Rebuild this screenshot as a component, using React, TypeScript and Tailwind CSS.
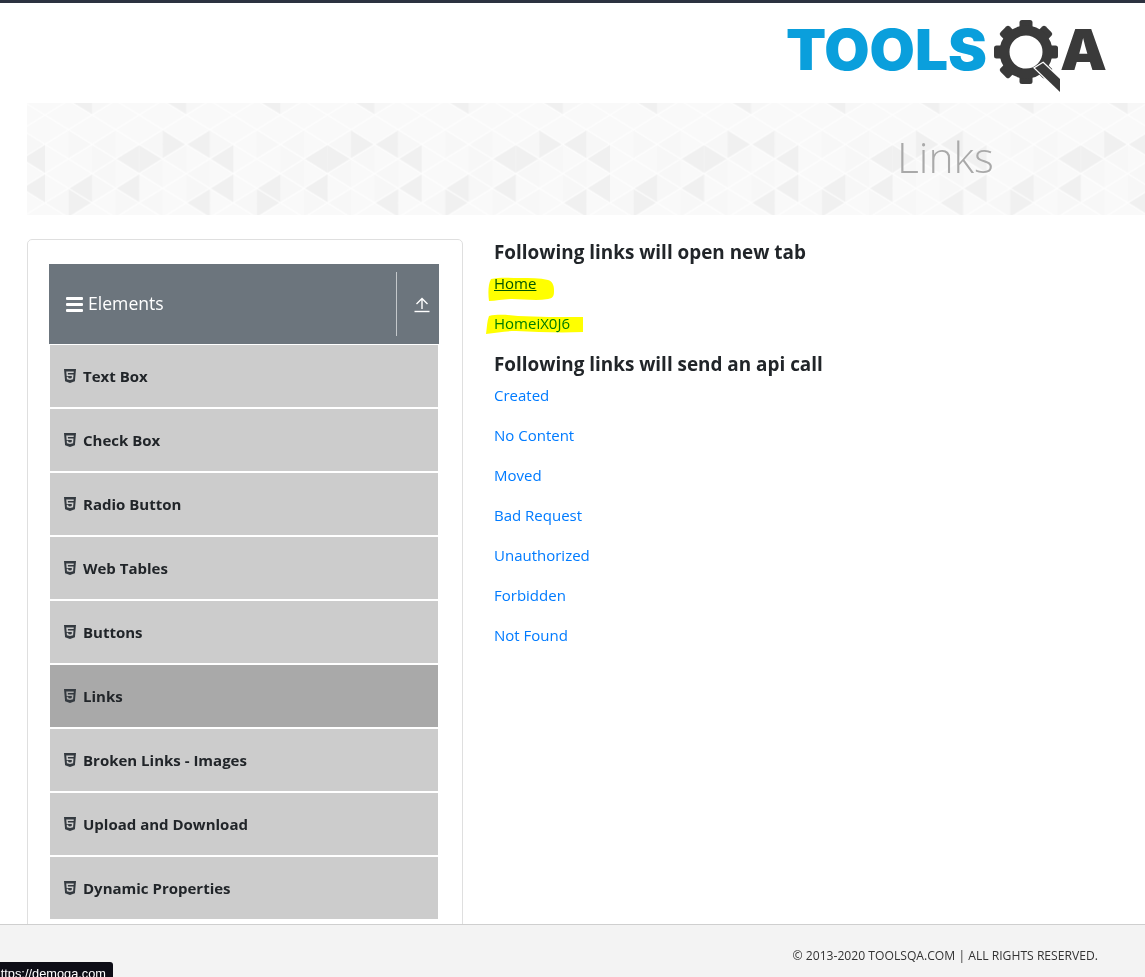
import { FaHtml5 } from "react-icons/fa";

const items = [
  "Text Box",
  "Check Box",
  "Radio Button",
  "Web Tables",
  "Buttons",
  "Links",
  "Broken Links - Images",
  "Upload and Download",
  "Dynamic Properties",
];

const apiLinks = ["Created", "No Content", "Moved", "Bad Request", "Unauthorized", "Forbidden", "Not Found"];

// banner lattice: one tile is 8 columns wide
const COL = 23.54;
const ROW = 14.65;
const px = (c: number) => c * COL;
const py = (r: number) => (r + 2) * ROW;

// [edge column, first row, apex column]
const darkTriangles = [
  [4, 2, 3],
  [4, 2, 5],
  [5, 1, 6],
  [7, 1, 6],
  [8, 2, 7],
  [8, 4, 7],
  [2, 4, 1],
  [4, 4, 3],
  [1, 5, 2],
  [7, 5, 6],
  [2, -2, 1],
  [6, -2, 5],
];

const softTriangles = [
  [2, -2, 3],
  [6, -2, 7],
  [1, 1, 2],
  [3, 1, 2],
  [7, 1, 8],
  [5, 1, 4],
  [2, 2, 3],
  [6, 2, 5],
  [6, 4, 7],
  [2, 4, 3],
  [5, 3, 4],
  [1, 5, 0],
  [3, 3, 2],
  [7, 3, 6],
  [5, 5, 4],
  [3, 5, 4],
];

function triangle([edge, row, apex]: number[]) {
  return `${px(edge)},${py(row)} ${px(edge)},${py(row + 2)} ${px(apex)},${py(row + 1)}`;
}

const diagonals: string[] = [];
for (let c = 0; c < 8; c++) {
  for (let r = -2; r < 8; r++) {
    if ((c + r) % 2 !== 0) continue;
    diagonals.push(`M${px(c)} ${py(r)}L${px(c + 1)} ${py(r + 1)}`);
    diagonals.push(`M${px(c)} ${py(r)}L${px(c + 1)} ${py(r - 1)}`);
  }
}

function BannerPattern() {
  return (
    <svg className="absolute inset-0 h-full w-full" aria-hidden="true">
      <defs>
        <pattern id="tri" x="18" y="-17.3" width={COL * 8} height={ROW * 12} patternUnits="userSpaceOnUse">
          {softTriangles.map((t, i) => (
            <polygon key={i} points={triangle(t)} fill="#f7f7f7" />
          ))}
          {darkTriangles.map((t, i) => (
            <polygon key={i} points={triangle(t)} fill="#f0f0f0" />
          ))}
          <path d={diagonals.join("")} stroke="#ffffff" strokeWidth="1.1" opacity="0.8" />
        </pattern>
      </defs>
      <rect width="100%" height="100%" fill="url(#tri)" />
    </svg>
  );
}

function Logo() {
  const teeth = [0, 45, 90, 135, 180, 225, 270, 315];
  return (
    <svg width="326" height="88" viewBox="785 8 326 88" role="img" aria-label="Tools QA">
      <text
        x="786"
        y="70"
        fontFamily="Inter, 'DejaVu Sans', sans-serif"
        fontWeight="900"
        fontSize="56"
        textLength="201"
        lengthAdjust="spacingAndGlyphs"
        fill="#0a9fdc"
      >
        TOOLS
      </text>
      <g fill="#3a3a3a">
        {teeth.map((a) => (
          <rect key={a} x="1019.5" y="20" width="13" height="12" rx="2.5" transform={`rotate(${a} 1026 52)`} />
        ))}
      </g>
      <circle cx="1026" cy="52" r="21.5" fill="none" stroke="#3a3a3a" strokeWidth="10" />
      <polygon points="1043,63 1060,79 1060,92 1035,68" fill="#3a3a3a" stroke="#ffffff" strokeWidth="2.5" paintOrder="stroke" />
      <text
        x="1060"
        y="70"
        fontFamily="Inter, 'DejaVu Sans', sans-serif"
        fontWeight="900"
        fontSize="56"
        textLength="47"
        lengthAdjust="spacingAndGlyphs"
        fill="#3a3a3a"
      >
        A
      </text>
    </svg>
  );
}

export default function App() {
  return (
    <div className="relative flex h-[977px] w-full flex-col overflow-hidden bg-white font-['Open_Sans',sans-serif] text-[#212529]">
      <div className="h-[3px] shrink-0 bg-[#2c3240]" />
      <header className="flex h-[100px] shrink-0 items-start justify-end pr-[34px] pt-[5px]">
        <Logo />
      </header>

      <div className="relative ml-[27px] flex h-[112px] shrink-0 items-center overflow-hidden bg-[#f9f9f9] pb-[3px] pl-[870px]">
        <BannerPattern />
        <h1 className="relative text-[42.5px] font-light leading-none text-[#a9a9a9]">Links</h1>
      </div>

      <main className="ml-[27px] mt-[24px] flex min-h-0 flex-1 overflow-hidden">
        <aside className="h-[800px] w-[436px] shrink-0 rounded-[5px] border border-[#dfdfdf] pl-[21px] pt-[24px]">
          <div className="flex h-[80px] w-[390px] items-center bg-[#6c757d] text-white">
            <svg width="17" height="15" viewBox="0 0 17 15" className="ml-[17px] mt-px" fill="#ffffff">
              <rect y="0" width="17" height="3" rx="1" />
              <rect y="6" width="17" height="3" rx="1" />
              <rect y="12" width="17" height="3" rx="1" />
            </svg>
            <span className="mb-px ml-[5px] text-[17.6px] leading-none">Elements</span>
            <div className="ml-auto flex h-[64px] w-[43px] items-center justify-center border-l border-[#c4c8cb] pl-[7px]">
              <svg width="16" height="16" viewBox="0 0 16 16" className="mt-[2px]" fill="none" stroke="#ffffff" strokeWidth="1.4">
                <path d="M0.5 14.5H15.5" />
                <path d="M8 12V1.5M2.5 7L8 1.5L13.5 7" />
              </svg>
            </div>
          </div>
          <ul className="w-[390px]">
            {items.map((item) => (
              <li
                key={item}
                className={`flex h-[64px] items-center border border-white pl-[12px] text-[15px] font-bold ${
                  item === "Links" ? "bg-[#a9a9a9]" : "bg-[#cccccc]"
                }`}
              >
                <FaHtml5 size={16} className="mr-[5px] shrink-0 text-[#343a40]" />
                <span>{item}</span>
              </li>
            ))}
          </ul>
        </aside>

        <section className="ml-[31px] pt-px text-[15px] leading-[22px]">
          <h5 className="mb-[8px] text-[18.9px] font-bold leading-[24px]">Following links will open new tab</h5>
          <p className="relative mb-[18px]">
            <a href="#home" className="text-[#0056b3] underline">
              Home
            </a>
            <svg className="absolute left-[-6px] top-[4px] mix-blend-multiply" width="68" height="26" viewBox="0 0 68 26" fill="#ffff00">
              <path d="M3 3C12 1 22 2 32 2C42 2 52 2 60 4C64 5 66 9 66 14C66 19 66 22 60 23C48 25 36 23 24 23C16 23 8 25 1 25C0 18 0 8 3 3Z" />
            </svg>
          </p>
          <p className="relative mb-[18px]">
            <a href="#dynamic" className="text-[#007bff]">
              HomeiX0J6
            </a>
            <svg className="absolute left-[-8px] top-[1px] mix-blend-multiply" width="98" height="22" viewBox="0 0 98 22" fill="#ffff00">
              <path d="M3 3C12 1 22 2 32 3C52 4 72 4 97 4L97 19C72 20 52 19 30 18C20 18 10 20 0 21C1 14 1 8 3 3Z" />
            </svg>
          </p>
          <h5 className="mb-[8px] text-[18.9px] font-bold leading-[24px]">Following links will send an api call</h5>
          {apiLinks.map((link) => (
            <p key={link} className="mb-[18px]">
              <a href="#api" className="text-[#007bff]">
                {link}
              </a>
            </p>
          ))}
        </section>
      </main>

      <footer className="flex h-[53px] shrink-0 items-center justify-end border-t border-[#cfcfcf] bg-[#f3f3f3] pr-[47px] pt-[11px] text-[12.15px] text-[#333333]">
        © 2013-2020 TOOLSQA.COM | ALL RIGHTS RESERVED.
      </footer>

      <div className="absolute bottom-0 left-0 flex h-[15px] w-[113px] justify-end overflow-hidden whitespace-nowrap rounded-tr-[3px] bg-[#0d0d16] pr-[7px] pt-[4px] font-['Liberation_Sans',sans-serif] text-[12.8px] leading-[15px] text-white">
        https://demoqa.com
      </div>
    </div>
  );
}
